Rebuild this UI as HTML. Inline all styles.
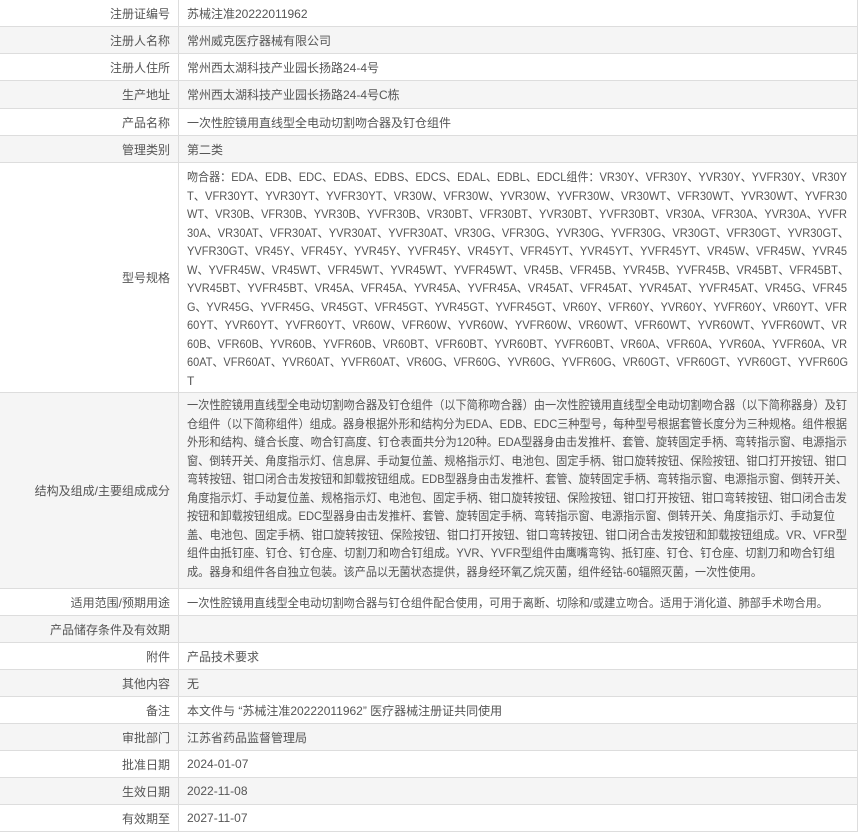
<!DOCTYPE html>
<html><head><meta charset="utf-8"><style>
*{margin:0;padding:0;box-sizing:border-box}
body{width:862px;height:830px;background:#fff;font-family:"Liberation Sans","Noto Sans CJK SC",sans-serif;font-size:12px;color:#555;overflow:hidden;position:relative}
.t{position:absolute;left:0;top:0;width:858px;border-right:1px solid #ddd}
.r{display:flex;border-bottom:1px solid #ddd;position:relative}
.r.g{background:#f5f5f5}
.l{width:179px;border-right:1px solid #ddd;text-align:right;padding-right:8px;display:flex;align-items:center;justify-content:flex-end;flex-shrink:0}
.c{padding-left:8px;display:flex;align-items:center;white-space:nowrap;overflow:hidden}
.m{display:block;padding-top:5px;line-height:18.5px}
.ln{width:max-content;transform-origin:0 0;white-space:nowrap}
</style></head><body>
<div class="t">
<div class="r" style="height:27px"><div class="l">注册证编号</div><div class="c">苏械注准20222011962</div></div>
<div class="r g" style="height:27px"><div class="l">注册人名称</div><div class="c">常州威克医疗器械有限公司</div></div>
<div class="r" style="height:27px"><div class="l">注册人住所</div><div class="c">常州西太湖科技产业园长扬路24-4号</div></div>
<div class="r g" style="height:28px"><div class="l">生产地址</div><div class="c">常州西太湖科技产业园长扬路24-4号C栋</div></div>
<div class="r" style="height:27px"><div class="l">产品名称</div><div class="c">一次性腔镜用直线型全电动切割吻合器及钉仓组件</div></div>
<div class="r g" style="height:27px"><div class="l">管理类别</div><div class="c">第二类</div></div>
<div class="r" style="height:230px"><div class="l">型号规格</div><div class="c m">
<div class="ln" data-w="660">吻合器：EDA、EDB、EDC、EDAS、EDBS、EDCS、EDAL、EDBL、EDCL组件：VR30Y、VFR30Y、YVR30Y、YVFR30Y、VR30Y</div>
<div class="ln" data-w="660">T、VFR30YT、YVR30YT、YVFR30YT、VR30W、VFR30W、YVR30W、YVFR30W、VR30WT、VFR30WT、YVR30WT、YVFR30</div>
<div class="ln" data-w="660">WT、VR30B、VFR30B、YVR30B、YVFR30B、VR30BT、VFR30BT、YVR30BT、YVFR30BT、VR30A、VFR30A、YVR30A、YVFR</div>
<div class="ln" data-w="662">30A、VR30AT、VFR30AT、YVR30AT、YVFR30AT、VR30G、VFR30G、YVR30G、YVFR30G、VR30GT、VFR30GT、YVR30GT、</div>
<div class="ln" data-w="660">YVFR30GT、VR45Y、VFR45Y、YVR45Y、YVFR45Y、VR45YT、VFR45YT、YVR45YT、YVFR45YT、VR45W、VFR45W、YVR45</div>
<div class="ln" data-w="662">W、YVFR45W、VR45WT、VFR45WT、YVR45WT、YVFR45WT、VR45B、VFR45B、YVR45B、YVFR45B、VR45BT、VFR45BT、</div>
<div class="ln" data-w="660">YVR45BT、YVFR45BT、VR45A、VFR45A、YVR45A、YVFR45A、VR45AT、VFR45AT、YVR45AT、YVFR45AT、VR45G、VFR45</div>
<div class="ln" data-w="660">G、YVR45G、YVFR45G、VR45GT、VFR45GT、YVR45GT、YVFR45GT、VR60Y、VFR60Y、YVR60Y、YVFR60Y、VR60YT、VFR</div>
<div class="ln" data-w="660">60YT、YVR60YT、YVFR60YT、VR60W、VFR60W、YVR60W、YVFR60W、VR60WT、VFR60WT、YVR60WT、YVFR60WT、VR</div>
<div class="ln" data-w="660">60B、VFR60B、YVR60B、YVFR60B、VR60BT、VFR60BT、YVR60BT、YVFR60BT、VR60A、VFR60A、YVR60A、YVFR60A、VR</div>
<div class="ln" data-w="661">60AT、VFR60AT、YVR60AT、YVFR60AT、VR60G、VFR60G、YVR60G、YVFR60G、VR60GT、VFR60GT、YVR60GT、YVFR60G</div>
<div class="ln">T</div></div></div>
<div class="r g" style="height:196px"><div class="l">结构及组成/主要组成成分</div><div class="c m" style="padding-top:3px">
<div class="ln" data-w="660">一次性腔镜用直线型全电动切割吻合器及钉仓组件（以下简称吻合器）由一次性腔镜用直线型全电动切割吻合器（以下简称器身）及钉</div>
<div class="ln" data-w="660">仓组件（以下简称组件）组成。器身根据外形和结构分为EDA、EDB、EDC三种型号，每种型号根据套管长度分为三种规格。组件根据</div>
<div class="ln" data-w="660">外形和结构、缝合长度、吻合钉高度、钉仓表面共分为120种。EDA型器身由击发推杆、套管、旋转固定手柄、弯转指示窗、电源指示</div>
<div class="ln" data-w="660">窗、倒转开关、角度指示灯、信息屏、手动复位盖、规格指示灯、电池包、固定手柄、钳口旋转按钮、保险按钮、钳口打开按钮、钳口</div>
<div class="ln" data-w="660">弯转按钮、钳口闭合击发按钮和卸载按钮组成。EDB型器身由击发推杆、套管、旋转固定手柄、弯转指示窗、电源指示窗、倒转开关、</div>
<div class="ln" data-w="660">角度指示灯、手动复位盖、规格指示灯、电池包、固定手柄、钳口旋转按钮、保险按钮、钳口打开按钮、钳口弯转按钮、钳口闭合击发</div>
<div class="ln" data-w="648">按钮和卸载按钮组成。EDC型器身由击发推杆、套管、旋转固定手柄、弯转指示窗、电源指示窗、倒转开关、角度指示灯、手动复位</div>
<div class="ln" data-w="660">盖、电池包、固定手柄、钳口旋转按钮、保险按钮、钳口打开按钮、钳口弯转按钮、钳口闭合击发按钮和卸载按钮组成。VR、VFR型</div>
<div class="ln" data-w="648">组件由抵钉座、钉仓、钉仓座、切割刀和吻合钉组成。YVR、YVFR型组件由鹰嘴弯钩、抵钉座、钉仓、钉仓座、切割刀和吻合钉组</div>
<div class="ln" data-w="575">成。器身和组件各自独立包装。该产品以无菌状态提供，器身经环氧乙烷灭菌，组件经钴-60辐照灭菌，一次性使用。</div></div></div>
<div class="r" style="height:27px"><div class="l">适用范围/预期用途</div><div class="c"><div class="ln" data-w="641">一次性腔镜用直线型全电动切割吻合器与钉仓组件配合使用，可用于离断、切除和/或建立吻合。适用于消化道、肺部手术吻合用。</div></div></div>
<div class="r g" style="height:27px"><div class="l">产品储存条件及有效期</div><div class="c"></div></div>
<div class="r" style="height:27px"><div class="l">附件</div><div class="c">产品技术要求</div></div>
<div class="r g" style="height:27px"><div class="l">其他内容</div><div class="c">无</div></div>
<div class="r" style="height:27px"><div class="l">备注</div><div class="c">本文件与 “苏械注准20222011962” 医疗器械注册证共同使用</div></div>
<div class="r g" style="height:27px"><div class="l">审批部门</div><div class="c">江苏省药品监督管理局</div></div>
<div class="r" style="height:27px"><div class="l">批准日期</div><div class="c">2024-01-07</div></div>
<div class="r g" style="height:27px"><div class="l">生效日期</div><div class="c">2022-11-08</div></div>
<div class="r" style="height:27px"><div class="l">有效期至</div><div class="c">2027-11-07</div></div>
</div>
<script>
document.querySelectorAll('.ln[data-w]').forEach(function(e){var w=e.getBoundingClientRect().width;var t=+e.getAttribute('data-w');if(w>0)e.style.transform='scaleX('+(t/w)+')';});
</script>
</body></html>
